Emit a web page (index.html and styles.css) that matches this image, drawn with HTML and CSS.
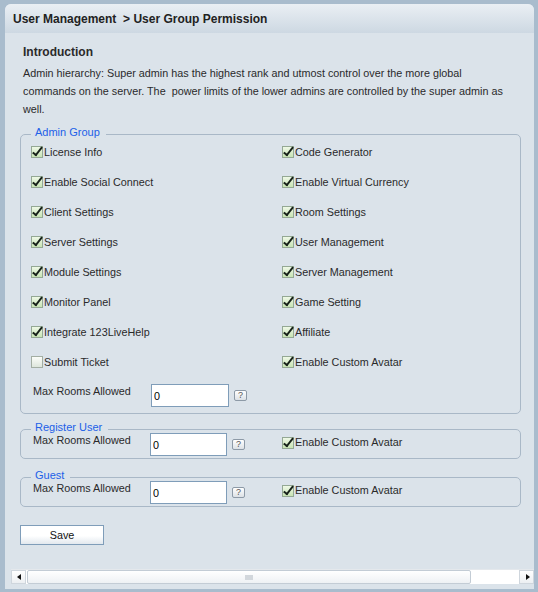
FILE: index.html
```html
<!DOCTYPE html>
<html lang="en">
<head>
    <meta charset="UTF-8">
    <meta name="viewport" content="width=device-width, initial-scale=1.0">
    <title>User Group Permission</title>
    <link rel="stylesheet" href="styles.css">
</head>
<body>

    <div class="panel">
        <div class="panel-header">User Management &nbsp;&gt; User Group Permission</div>

        <div class="panel-body">
            <h3 class="intro-title">Introduction</h3>
            <p class="intro-text">Admin hierarchy: Super admin has the highest rank and utmost control over the more global commands on the server. The &nbsp;power limits of the lower admins are controlled by the super admin as well.</p>

            <fieldset class="group">
                <legend>Admin Group</legend>
                <div class="perm-grid">
                    <label class="check"><span class="box on"></span>License Info</label>
                    <label class="check"><span class="box on"></span>Code Generator</label>
                    <label class="check"><span class="box on"></span>Enable Social Connect</label>
                    <label class="check"><span class="box on"></span>Enable Virtual Currency</label>
                    <label class="check"><span class="box on"></span>Client Settings</label>
                    <label class="check"><span class="box on"></span>Room Settings</label>
                    <label class="check"><span class="box on"></span>Server Settings</label>
                    <label class="check"><span class="box on"></span>User Management</label>
                    <label class="check"><span class="box on"></span>Module Settings</label>
                    <label class="check"><span class="box on"></span>Server Management</label>
                    <label class="check"><span class="box on"></span>Monitor Panel</label>
                    <label class="check"><span class="box on"></span>Game Setting</label>
                    <label class="check"><span class="box on"></span>Integrate 123LiveHelp</label>
                    <label class="check"><span class="box on"></span>Affiliate</label>
                    <label class="check"><span class="box"></span>Submit Ticket</label>
                    <label class="check"><span class="box on"></span>Enable Custom Avatar</label>
                </div>
                <div class="limit-row admin-limit">
                    <span class="limit-label">Max Rooms Allowed</span>
                    <input class="limit-input" type="text" value="0">
                    <span class="help">?</span>
                </div>
            </fieldset>

            <fieldset class="group small-group">
                <legend>Register User</legend>
                <div class="inline-row">
                    <div class="limit-row">
                        <span class="limit-label">Max Rooms Allowed</span>
                        <input class="limit-input" type="text" value="0">
                        <span class="help">?</span>
                    </div>
                    <label class="check"><span class="box on"></span>Enable Custom Avatar</label>
                </div>
            </fieldset>

            <fieldset class="group small-group guest-group">
                <legend>Guest</legend>
                <div class="inline-row">
                    <div class="limit-row">
                        <span class="limit-label">Max Rooms Allowed</span>
                        <input class="limit-input" type="text" value="0">
                        <span class="help">?</span>
                    </div>
                    <label class="check"><span class="box on"></span>Enable Custom Avatar</label>
                </div>
            </fieldset>

            <button class="save-button">Save</button>
        </div>

        <!-- horizontal scroll bar at the bottom of the panel -->
        <div class="hscroll">
            <span class="scroll-arrow arrow-left"></span>
            <span class="scroll-thumb"><span class="grip"></span></span>
            <span class="scroll-track"></span>
            <span class="scroll-arrow arrow-right"></span>
        </div>
    </div>

</body>
</html>
```

FILE: styles.css
```css
body {
    margin: 0;
    background-color: #a9bccd;
    font-family: "Liberation Sans", Arial, sans-serif;
    font-size: 10.8px;
    color: #2a2a2a;
}

.panel {
    margin: 4px 4px 4px 5px;
    padding-bottom: 5px;
    background-color: #dbe3ea;
    border-radius: 6px 6px 0 0;
}

.panel-header {
    height: 29px;
    line-height: 31px;
    padding-left: 8px;
    font-size: 12px;
    font-weight: bold;
    color: #222;
    background: linear-gradient(#eaeff4, #cdd8e2);
    border-radius: 6px 6px 0 0;
}

.panel-body {
    padding: 0 13px 0 15px;
}

.intro-title {
    margin: 10px 0 3px;
    padding-left: 3px;
    font-size: 12px;
    line-height: 18px;
}

.intro-text {
    margin: 0;
    padding: 0 11px 0 3px;
    line-height: 18px;
}

/* Groups */
.group {
    margin: 8px 0 0;
    padding: 0 10px 6px;
    border: 1px solid #a9b8c7;
    border-radius: 5px;
    min-width: 0;
}

.group legend {
    padding: 0 6px 4px 4px;
    line-height: 12px;
    font-size: 11px;
    color: #2160e8;
}

.small-group {
    margin-top: 7px;
    padding-bottom: 2px;
}

.guest-group {
    margin-top: 10px;
}

.perm-grid {
    display: grid;
    grid-template-columns: 251px 1fr;
    grid-auto-rows: 30px;
    align-items: center;
    margin-top: -5px;
}

.check {
    display: flex;
    align-items: center;
    line-height: 15px;
}

.box {
    position: relative;
    width: 12px;
    height: 12px;
    box-sizing: border-box;
    margin-right: 1px;
    border: 1px solid #a3aea3;
    background: linear-gradient(#fbfdf9, #dde6dc);
}

.box.on {
    border-color: #94a894;
    background: linear-gradient(#eef8e6, #c8e4b4);
}

.box.on::after {
    content: "";
    position: absolute;
    left: 3px;
    top: -2px;
    width: 3px;
    height: 9px;
    border: solid #17221a;
    border-width: 0 2px 2px 0;
    transform: rotate(38deg);
}

/* Max rooms rows */
.limit-row {
    display: flex;
    align-items: flex-start;
    padding-left: 2px;
}

.admin-limit {
    margin-top: 7px;
}

.limit-label {
    width: 118px;
    line-height: 15px;
}

.limit-input {
    width: 78px;
    height: 23px;
    box-sizing: border-box;
    margin: 0;
    padding: 0 2px;
    border: 1px solid #7f9db9;
    background-color: #fff;
    font: inherit;
    color: #000;
}

.small-group .limit-label {
    width: 117px;
}

.small-group .limit-input {
    width: 77px;
}

.help {
    width: 13px;
    height: 11px;
    box-sizing: border-box;
    margin: 6px 0 0 5px;
    border: 1px solid #8d9aa7;
    border-radius: 2px;
    background: linear-gradient(#fff, #dce1e6);
    font-size: 9px;
    line-height: 9px;
    text-align: center;
    color: #555;
}

.inline-row {
    display: grid;
    grid-template-columns: 251px 1fr;
    align-items: start;
    margin-top: -4px;
}

.inline-row .check {
    margin-top: 2px;
}

.save-button {
    display: block;
    width: 84px;
    height: 20px;
    margin-top: 18px;
    padding: 0;
    border: 1px solid #7f9db9;
    background: linear-gradient(#fff 55%, #e2e8ee);
    font: inherit;
    color: #111;
    cursor: pointer;
}

/* Scroll bar */
.hscroll {
    display: flex;
    height: 14px;
    margin: 24px 0 0 6px;
    background-color: #fff;
    border-top: 1px solid #e4e8ec;
}

.scroll-arrow {
    position: relative;
    width: 15px;
    background: linear-gradient(#fff, #eceff2);
    border: 1px solid #cfd6dd;
    box-sizing: border-box;
}

.scroll-arrow::after {
    content: "";
    position: absolute;
    top: 3px;
    border-top: 3px solid transparent;
    border-bottom: 3px solid transparent;
}

.arrow-left::after {
    left: 5px;
    border-right: 4px solid #111;
}

.arrow-right::after {
    left: 6px;
    border-left: 4px solid #111;
}

.scroll-thumb {
    display: flex;
    align-items: center;
    justify-content: center;
    width: 444px;
    margin-left: 1px;
    border: 1px solid #c3ccd5;
    border-radius: 2px;
    background: linear-gradient(#fff, #eef1f4);
    box-sizing: border-box;
}

.grip {
    width: 8px;
    height: 5px;
    background-color: #d2d7dc;
}

.scroll-track {
    flex: 1;
}
```
